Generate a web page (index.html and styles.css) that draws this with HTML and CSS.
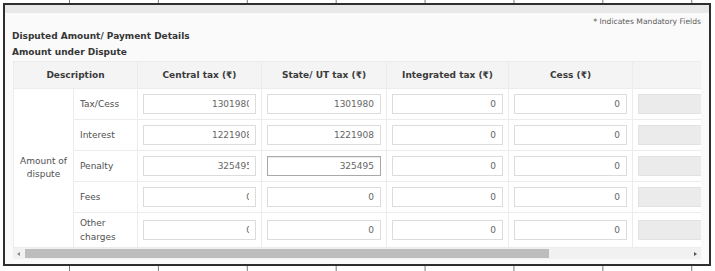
FILE: index.html
```html
<html>
<head>
<title>Disputed Amount</title>
<meta charset="utf-8">
<meta name="viewport" content="width=device-width, initial-scale=1">
<link rel="stylesheet" href="styles.css">
</head>
<body>
<div class="cornice">
	<div class="banda"></div>
	<div class="pannello">
		<p class="obbligatori"><span class="stella">*</span> Indicates Mandatory Fields</p>
		<h4 class="titolo">Disputed Amount/ Payment Details</h4>
		<h5 class="sottotitolo">Amount under Dispute</h5>

		<div class="tab-clip">
			<table class="disputa">
				<colgroup>
					<col class="c-amt"><col class="c-lbl">
					<col class="c-num"><col class="c-num2"><col class="c-num3"><col class="c-num">
					<col class="c-last">
				</colgroup>
				<thead>
					<tr>
						<th colspan="2">Description</th>
						<th>Central tax (&#8377;)</th>
						<th>State/ UT tax (&#8377;)</th>
						<th>Integrated tax (&#8377;)</th>
						<th>Cess (&#8377;)</th>
						<th></th>
					</tr>
				</thead>
				<tbody>
					<tr>
						<td rowspan="5" class="amt">Amount of dispute</td>
						<td class="lbl">Tax/Cess</td>
						<td><div class="box"><div class="clip"><span class="sposta">1301980</span></div></div></td>
						<td><div class="box"><div class="clip">1301980</div></div></td>
						<td><div class="box"><div class="clip">0</div></div></td>
						<td><div class="box"><div class="clip">0</div></div></td>
						<td><div class="box spento"></div></td>
					</tr>
					<tr>
						<td class="lbl">Interest</td>
						<td><div class="box"><div class="clip"><span class="sposta">1221908</span></div></div></td>
						<td><div class="box"><div class="clip">1221908</div></div></td>
						<td><div class="box"><div class="clip">0</div></div></td>
						<td><div class="box"><div class="clip">0</div></div></td>
						<td><div class="box spento"></div></td>
					</tr>
					<tr>
						<td class="lbl">Penalty</td>
						<td><div class="box"><div class="clip"><span class="sposta">325495</span></div></div></td>
						<td><div class="box attivo"><div class="clip">325495</div></div></td>
						<td><div class="box"><div class="clip">0</div></div></td>
						<td><div class="box"><div class="clip">0</div></div></td>
						<td><div class="box spento"></div></td>
					</tr>
					<tr>
						<td class="lbl">Fees</td>
						<td><div class="box"><div class="clip"><span class="sposta">0</span></div></div></td>
						<td><div class="box"><div class="clip">0</div></div></td>
						<td><div class="box"><div class="clip">0</div></div></td>
						<td><div class="box"><div class="clip">0</div></div></td>
						<td><div class="box spento"></div></td>
					</tr>
					<tr class="alta">
						<td class="lbl">Other charges</td>
						<td><div class="box"><div class="clip"><span class="sposta">0</span></div></div></td>
						<td><div class="box"><div class="clip">0</div></div></td>
						<td><div class="box"><div class="clip">0</div></div></td>
						<td><div class="box"><div class="clip">0</div></div></td>
						<td><div class="box spento"></div></td>
					</tr>
				</tbody>
			</table>
		</div>

		<div class="barra">
			<div class="freccia"><span class="tri-sx"></span></div>
			<div class="binario"><div class="cursore"></div></div>
			<div class="freccia"><span class="tri-dx"></span></div>
		</div>
	</div>
</div>
</body>
</html>
```

FILE: styles.css
```css
* {
	font-family: "DejaVu Sans", Verdana, sans-serif;
	box-sizing: border-box;
}

html, body {
	margin: 0;
	padding: 0;
	height: 100%;
}

body {
	background-color: #ffffff;
	background-image: linear-gradient(to right, #7a7a7a 0, #7a7a7a 1px, transparent 1px);
	background-size: 88.9px 100%;
	background-position: 69px 0;
}

.cornice {
	position: relative;
	top: 3px;
	margin-left: 3px;
	width: 708px;
	height: 263px;
	border: 2px solid #2e2e2e;
	background-color: #fafafa;
}

.banda {
	height: 8px;
	background-color: #e8e8e8;
}

.pannello {
	padding: 4px 8px 0 8px;
}

.obbligatori {
	margin: 0;
	line-height: 10px;
	font-size: 7.6px;
	color: #5a5a5a;
	text-align: right;
}

.stella {
	font-weight: bold;
	color: #777;
}

.titolo, .sottotitolo {
	font-size: 9px;
	font-weight: bold;
	color: #363636;
	line-height: 12px;
	margin-left: -1px;
}

.titolo {
	margin-top: 3px;
	margin-bottom: 0;
}

.sottotitolo {
	margin-top: 4px;
	margin-bottom: 3px;
}

.tab-clip {
	width: 688px;
	overflow: hidden;
}

.disputa {
	table-layout: fixed;
	border-collapse: collapse;
	width: 743px;
	font-size: 9px;
	color: #505050;
}

.c-amt { width: 60px; }
.c-lbl { width: 64px; }
.c-num { width: 124px; }
.c-num2 { width: 125px; }
.c-num3 { width: 122px; }
.c-last { width: 124px; }

.disputa th, .disputa td {
	border: 1px solid #ececec;
}

.disputa th {
	height: 27px;
	background-color: #f4f4f4;
	color: #3a3a3a;
	font-weight: bold;
	text-align: center;
	padding: 0;
}

.disputa td {
	background-color: #ffffff;
	padding: 5px 5px;
	height: 31px;
}

.disputa tr.alta td {
	height: 35px;
}

.disputa td.amt {
	text-align: center;
	padding: 2px 4px;
	line-height: 13px;
}

.disputa td.lbl {
	padding: 3px 6px;
	line-height: 14px;
}

.box {
	height: 20px;
	border: 1px solid #dcdcdc;
	background-color: #ffffff;
	padding: 0 6px;
}

.clip {
	overflow: hidden;
	white-space: nowrap;
	text-align: right;
	line-height: 18px;
	color: #666;
}

.sposta {
	display: inline-block;
	margin-right: -3px;
}

.attivo {
	border-color: #a8a8a8;
	box-shadow: inset 0 1px 1px rgba(0,0,0,0.08);
}

.spento {
	background-color: #ebebeb;
	border-color: #e2e2e2;
}

.barra {
	display: flex;
	width: 688px;
	height: 11px;
	background-color: #f1f1f1;
}

.freccia {
	width: 11px;
	display: flex;
	align-items: center;
	justify-content: center;
}

.tri-sx, .tri-dx {
	width: 0;
	height: 0;
	border-top: 2.5px solid transparent;
	border-bottom: 2.5px solid transparent;
}

.tri-sx {
	border-right: 3px solid #8a8a8a;
}

.tri-dx {
	border-left: 3px solid #555;
}

.binario {
	flex: 1;
	padding: 1px 0 1px 1px;
}

.cursore {
	width: 524px;
	height: 100%;
	background-color: #bdbdbd;
}
```
